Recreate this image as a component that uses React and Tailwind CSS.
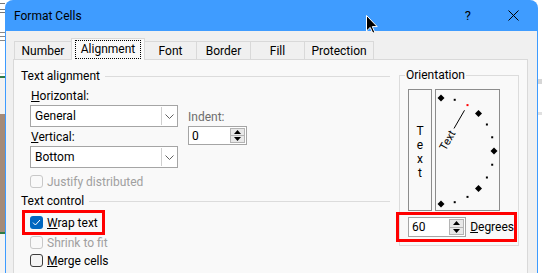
import React from "react";

function Chevron() {
  return (
    <svg width="9" height="5" viewBox="0 0 9 5">
      <path d="M0.5 0.5 L4.5 4.5 L8.5 0.5" fill="none" stroke="#606060" strokeWidth="1" />
    </svg>
  );
}

function Select({ value }) {
  return (
    <div className="flex h-[22px] w-[148px] items-stretch border border-[#a5a5a5] bg-white">
      <div className="flex flex-1 items-center pl-[4px]">{value}</div>
      <div className="my-px mr-px flex w-[15px] items-center justify-center border-l border-[#cfcfcf]">
        <Chevron />
      </div>
    </div>
  );
}

function Spinner({ value, className }) {
  return (
    <div className={"flex items-stretch border border-[#a5a5a5] bg-white " + className}>
      <div className="flex flex-1 items-center pl-[3px]">{value}</div>
      <div className="my-px mr-px flex w-[15px] flex-col border border-[#b4b4b4] bg-[#e8e8e8]">
        <div className="flex flex-1 items-center justify-center border-b border-[#b4b4b4]">
          <svg width="7" height="4" viewBox="0 0 7 4">
            <polygon points="0,4 3.5,0 7,4" fill="#000" />
          </svg>
        </div>
        <div className="flex flex-1 items-center justify-center">
          <svg width="7" height="4" viewBox="0 0 7 4">
            <polygon points="0,0 7,0 3.5,4" fill="#000" />
          </svg>
        </div>
      </div>
    </div>
  );
}

function Checkbox({ state }) {
  if (state === "checked") {
    return (
      <div className="flex h-[13px] w-[13px] shrink-0 items-center justify-center rounded-[3px] bg-[#0067c0]">
        <svg width="9" height="7" viewBox="0 0 9 7">
          <path d="M1 3.6 L3.4 6 L8 1" fill="none" stroke="#fff" strokeWidth="1" />
        </svg>
      </div>
    );
  }
  if (state === "disabled") {
    return <div className="h-[13px] w-[13px] shrink-0 rounded-[3px] border border-[#c8c8c8] bg-[#f9f9f9]" />;
  }
  return <div className="h-[13px] w-[13px] shrink-0 rounded-[3px] border border-[#3c3c3c] bg-[#f4f4f4]" />;
}

function Dial() {
  const cx = 5;
  const cy = 61;
  const r = 53;
  const marks = [];
  for (let a = 90; a >= -90; a -= 15) {
    const t = (a * Math.PI) / 180;
    const x = cx + r * Math.cos(t);
    const y = cy - r * Math.sin(t);
    if (a % 45 === 0) {
      marks.push(
        <polygon
          key={a}
          points={`${x},${y - 3.5} ${x + 3.5},${y} ${x},${y + 3.5} ${x - 3.5},${y}`}
          fill="#000"
        />
      );
    } else {
      marks.push(
        <rect key={a} x={x - 1} y={y - 1} width="2" height="2" fill={a === 60 ? "#ff0000" : "#000"} />
      );
    }
  }
  const t60 = Math.PI / 3;
  return (
    <svg width="63" height="120" viewBox="0 0 63 120">
      {marks}
      <line
        x1={cx + 26 * Math.cos(t60)}
        y1={cy - 26 * Math.sin(t60)}
        x2={cx + 47 * Math.cos(t60)}
        y2={cy - 47 * Math.sin(t60)}
        stroke="#000"
        strokeWidth="1"
      />
      <text
        transform={`translate(${cx},${cy}) rotate(-60)`}
        x="2"
        y="4"
        fontSize="11"
        fontFamily="Roboto, sans-serif"
        fill="#000"
      >
        Text
      </text>
    </svg>
  );
}

function Cursor() {
  return (
    <svg className="absolute left-[366px] top-[15px]" width="12" height="19" viewBox="0 0 12 19">
      <path
        d="M0.5 0.5 L0.5 16 L4.2 12.4 L6.8 18.2 L8.8 17.3 L6.3 11.6 L11.2 11.6 Z"
        fill="#000"
        stroke="#fff"
        strokeWidth="1"
        strokeLinejoin="round"
      />
    </svg>
  );
}

function LeftStrip() {
  return (
    <div className="flex w-[5px] shrink-0 flex-col bg-white">
      <div className="h-[3px]" />
      <div className="h-px bg-[#777]" />
      <div className="h-[5px]" />
      <div className="h-px bg-[#777]" />
      <div className="h-[2px]" />
      <div className="h-px bg-[#777]" />
      <div className="h-[19px]" />
      <div className="h-px bg-[#888]" />
      <div className="h-[3px]" />
      <div className="h-px bg-[#888]" />
      <div className="h-[3px]" />
      <div className="h-px bg-[#888]" />
      <div className="h-[32px]" />
      <div className="h-px bg-[#d4d4d4]" />
      <div className="h-[2px]" />
      <div className="h-[2px] bg-[#2f7a45]" />
      <div className="h-[36px] bg-[#f2f2f2]" />
      <div className="h-[118px] bg-[#a48a78]" />
      <div className="h-[2px] bg-[#2f7a45]" />
      <div className="flex-1 bg-[#f4f4f4]" />
    </div>
  );
}

function RightStrip() {
  return (
    <div className="flex w-[4px] shrink-0 flex-col bg-white">
      <div className="h-[79px]" />
      <div className="h-[5px] bg-[#d6d6d6]" />
      <div className="h-[28px]" />
      <div className="h-[3px] bg-[#e0e0e0]" />
      <div className="flex-1" />
    </div>
  );
}

function Tab({ label, w, selected }) {
  if (selected) {
    return (
      <div
        className={
          "relative z-10 -mb-px flex h-[22px] items-center justify-center border border-b-0 border-[#d9d9d9] bg-[#f9f9f9] " +
          w
        }
      >
        <span className="border border-dotted border-black px-[5px] py-[2px] leading-[13px]">{label}</span>
      </div>
    );
  }
  return (
    <div className={"-ml-px flex h-[18px] items-center justify-center border border-b-0 border-[#d9d9d9] bg-[#f0f0f0] " + w}>
      {label}
    </div>
  );
}

export default function App() {
  return (
    <div className="relative flex h-[273px] w-[542px] overflow-hidden bg-white font-['Roboto','Noto_Sans',sans-serif] text-[12px] leading-none text-black">
      <LeftStrip />
      <div className="flex w-[533px] shrink-0 flex-col">
        <div className="flex h-[31px] shrink-0 items-center rounded-t-[8px] bg-[#3f9cff] pl-[9px] pr-[19px]">
          <span className="text-[12px]">Format Cells</span>
          <span className="ml-auto text-[13px]">?</span>
          <svg className="ml-[37px]" width="11" height="11" viewBox="0 0 11 11">
            <path d="M0.5 0.5 L10.5 10.5 M10.5 0.5 L0.5 10.5" stroke="#000" strokeWidth="1" />
          </svg>
        </div>
        <div className="flex flex-1 flex-col border-x border-[#3d9bff] bg-[#f0f0f0] pl-[7px] pr-[9px] pt-[7px]">
          <div className="flex h-[21px] items-end">
            <Tab label="Number" w="w-[58px] ml-px" />
            <Tab label="Alignment" w="w-[74px] -ml-px" selected />
            <Tab label="Font" w="w-[53px]" />
            <Tab label="Border" w="w-[55px]" />
            <Tab label="Fill" w="w-[55px]" />
            <Tab label="Protection" w="w-[70px]" />
          </div>
          <div className="flex h-[230px] border border-[#d9d9d9] bg-[#f9f9f9] pl-[7px]">
            {/* Left column */}
            <div className="flex w-[369px] flex-col">
              <div className="mt-[8px] flex h-[16px] items-center">
                <span>Text alignment</span>
                <div className="ml-[5px] h-px flex-1 bg-[#dcdcdc]" />
              </div>
              <div className="ml-[9px] flex">
                <div className="flex w-[148px] flex-col">
                  <div className="mt-[4px] flex h-[16px] items-center pl-px">
                    <span>
                      <u>H</u>orizontal:
                    </span>
                  </div>
                  <div className="mt-px">
                    <Select value="General" />
                  </div>
                  <div className="mt-[2px] flex h-[16px] items-center pl-px">
                    <span>
                      <u>V</u>ertical:
                    </span>
                  </div>
                  <div className="mt-px">
                    <Select value="Bottom" />
                  </div>
                  <div className="mt-[7px] flex h-[13px] items-center gap-[4px]">
                    <Checkbox state="disabled" />
                    <span className="text-[#a0a0a0]">Justify distributed</span>
                  </div>
                </div>
                <div className="ml-[10px] flex flex-col">
                  <div className="mt-[25px] flex h-[16px] items-center text-[#6d6d6d]">Indent:</div>
                  <Spinner value="0" className="mt-px h-[19px] w-[59px]" />
                </div>
              </div>
              <div className="mt-[5px] flex h-[16px] items-center">
                <span>Text control</span>
                <div className="ml-[5px] h-px flex-1 bg-[#dcdcdc]" />
              </div>
              <div className="ml-px mt-px flex h-[25px] w-[83px] items-center gap-[4px] border-[3px] border-[#ff0000] pl-[5px]">
                <Checkbox state="checked" />
                <span>
                  <u>W</u>rap text
                </span>
              </div>
              <div className="ml-[9px] mt-px flex h-[13px] items-center gap-[4px]">
                <Checkbox state="disabled" />
                <span className="text-[#a0a0a0]">Shrink to fit</span>
              </div>
              <div className="ml-[9px] mt-[5px] flex h-[13px] items-center gap-[4px]">
                <Checkbox state="normal" />
                <span>
                  <u>M</u>erge cells
                </span>
              </div>
            </div>
            {/* Orientation */}
            <div className="ml-[9px] mt-[15px] flex h-[171px] w-[120px] flex-col border border-[#dcdcdc]">
              <div className="-mt-[9px] ml-[5px] flex h-[16px] w-fit items-center bg-[#f9f9f9] px-px">Orientation</div>
              <div className="ml-[8px] mt-[6px] flex h-[122px]">
                <div className="flex w-[24px] flex-col items-center border border-[#8c8c8c] pt-[34px] leading-[14px]">
                  <span>T</span>
                  <span>e</span>
                  <span>x</span>
                  <span>t</span>
                </div>
                <div className="ml-[3px] w-[65px] border border-[#8c8c8c]">
                  <Dial />
                </div>
              </div>
              <div className="-ml-[4px] mt-px flex h-[30px] w-[121px] items-center border-[3px] border-[#ff0000] pl-[9px]">
                <Spinner value="60" className="h-[20px] w-[59px]" />
                <span className="ml-[4px]">
                  <u>D</u>egrees
                </span>
              </div>
            </div>
          </div>
        </div>
      </div>
      <RightStrip />
      <Cursor />
    </div>
  );
}
